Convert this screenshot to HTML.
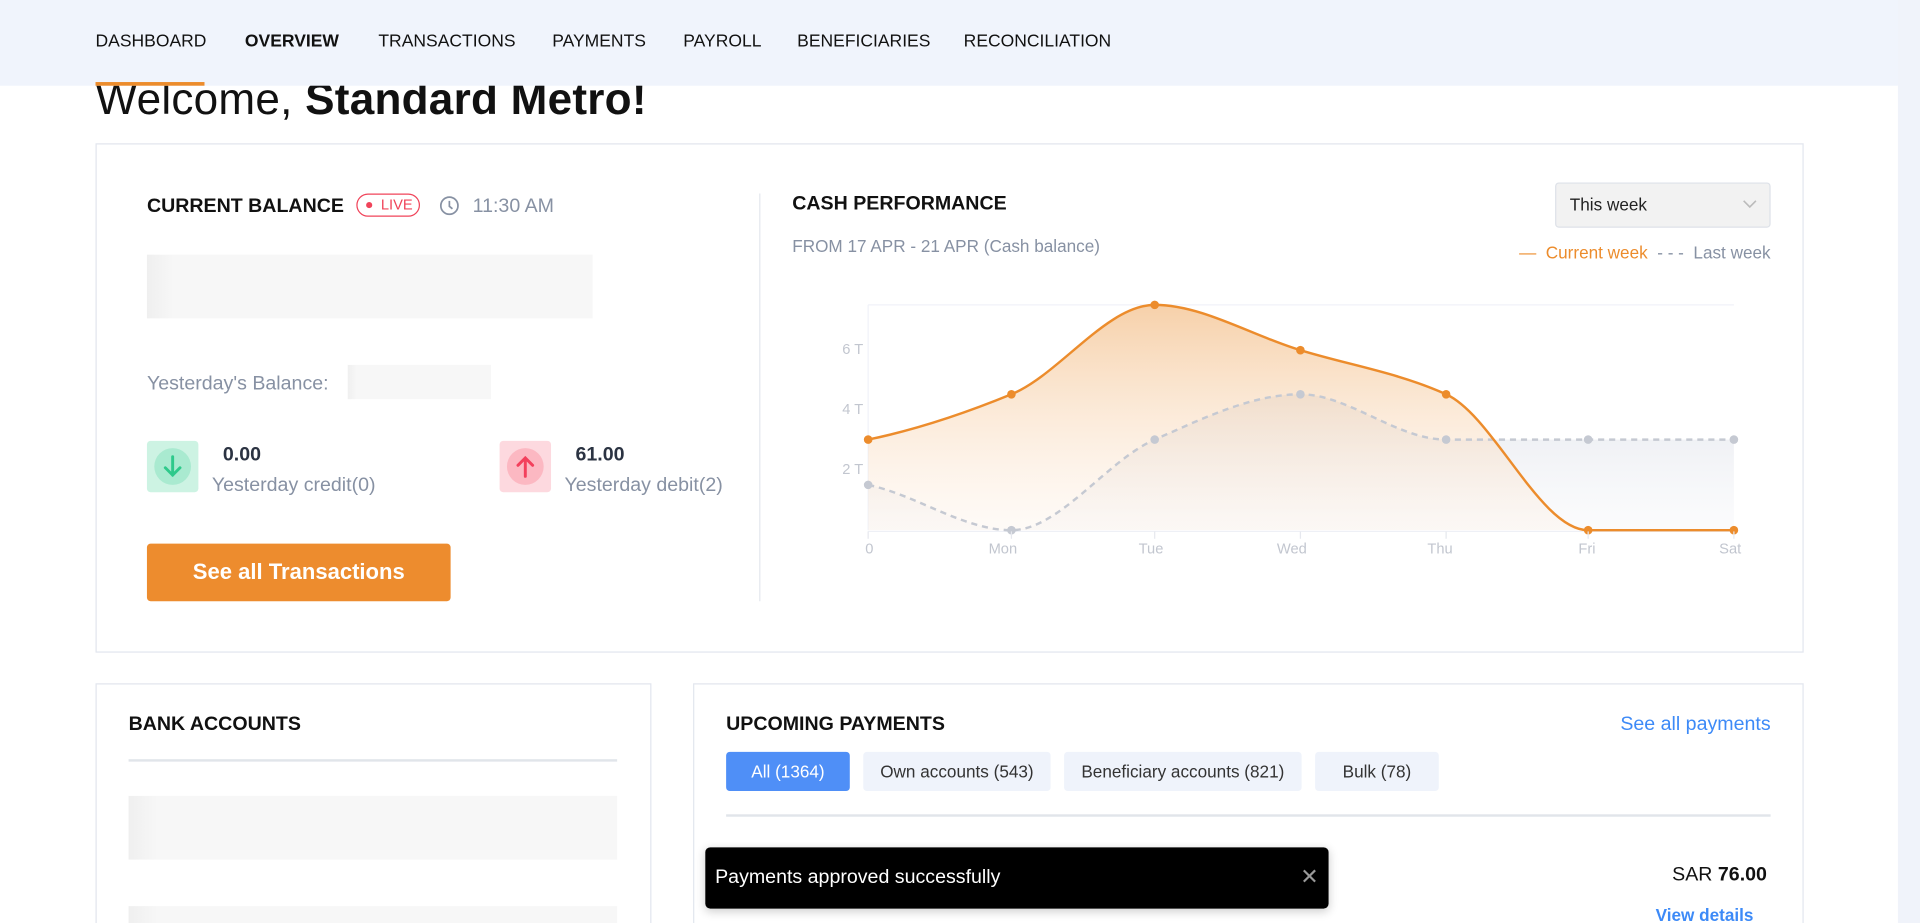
<!DOCTYPE html>
<html><head><meta charset="utf-8"><style>
html,body{margin:0;padding:0;width:1920px;height:923px;overflow:hidden;background:#fff}
#w{position:absolute;left:0;top:0;width:1568px;height:753.7px;overflow:hidden;transform:scale(1.22449);transform-origin:0 0;font-family:"Liberation Sans",sans-serif;color:#111}
.a{position:absolute;white-space:nowrap}
.g{color:#8791a3}
.card{position:absolute;border:1px solid #e2e6ee;background:#fff;box-sizing:border-box}
.sk{position:absolute;background:linear-gradient(90deg,#efefef,#f7f7f7 6%,#f7f7f7)}
.tab{position:absolute;top:614px;height:32px;line-height:32px;text-align:center;font-size:14px;border-radius:3px;background:#eff3fb;color:#333}
</style></head><body><div id="w">
<div class="a" style="left:1550px;top:0;width:18px;height:800px;background:#f0f3fa"></div>
<div class="a" style="left:78px;top:56px;font-size:36px;line-height:50px;letter-spacing:0.2px">Welcome, <b>Standard Metro!</b></div>
<div class="a" style="left:0;top:0;width:1550px;height:70px;background:#f0f4fc"></div>
<div class="a" style="left:78px;top:67px;width:89px;height:3px;background:#ec8c2c"></div>
<div class="a" style="top:25px;left:0;font-size:14.3px;line-height:18px">
<span class="a" style="left:78px">DASHBOARD</span><span class="a" style="left:200px;font-weight:bold">OVERVIEW</span><span class="a" style="left:309px">TRANSACTIONS</span><span class="a" style="left:451px">PAYMENTS</span><span class="a" style="left:558px">PAYROLL</span><span class="a" style="left:651px">BENEFICIARIES</span><span class="a" style="left:787px">RECONCILIATION</span></div>

<div class="card" style="left:78px;top:117px;width:1395px;height:416px"></div>
<div class="a" style="left:120px;top:159px;font-size:16px;font-weight:bold;line-height:20px">CURRENT BALANCE</div>
<div class="a" style="left:291px;top:158px;width:52px;height:19px;border:1px solid #f0445a;border-radius:10px;box-sizing:border-box;color:#f0445a;font-size:12px;line-height:17px"><span style="position:absolute;left:7px;top:6px;width:5px;height:5px;border-radius:50%;background:#f0445a"></span><span style="position:absolute;left:19px">LIVE</span></div>
<svg class="a" style="left:358px;top:159px" width="18" height="18" viewBox="0 0 18 18"><circle cx="9" cy="9" r="7" fill="none" stroke="#8791a3" stroke-width="1.4"/><path d="M9 5v4.5l2.5 2" fill="none" stroke="#8791a3" stroke-width="1.4"/></svg>
<div class="a g" style="left:386px;top:159px;font-size:16px;line-height:20px">11:30 AM</div>
<div class="sk" style="left:120px;top:208px;width:364px;height:52px"></div>
<div class="a g" style="left:120px;top:305px;font-size:16px">Yesterday's Balance:</div>
<div class="sk" style="left:284px;top:298px;width:117px;height:28px"></div>
<div class="a" style="left:120px;top:360px;width:42px;height:42px;border-radius:3px;background:#cdf3e3"><div style="position:absolute;left:6px;top:6px;width:30px;height:30px;border-radius:50%;background:#a9ead0"></div><svg style="position:absolute;left:11px;top:10px" width="20" height="22" viewBox="0 0 20 22"><path d="M10 3v15M4 12l6 6 6-6" fill="none" stroke="#2ec98b" stroke-width="2.4" stroke-linecap="round"/></svg></div>
<div class="a" style="left:182px;top:363px;font-size:16px;font-weight:bold;color:#2b3342">0.00</div>
<div class="a g" style="left:173px;top:388px;font-size:16px">Yesterday credit(0)</div>
<div class="a" style="left:408px;top:360px;width:42px;height:42px;border-radius:3px;background:#fdd9df"><div style="position:absolute;left:6px;top:6px;width:30px;height:30px;border-radius:50%;background:#fcb8c2"></div><svg style="position:absolute;left:11px;top:10px" width="20" height="22" viewBox="0 0 20 22"><path d="M10 19V4M4 10l6-6 6 6" fill="none" stroke="#f3405c" stroke-width="2.4" stroke-linecap="round"/></svg></div>
<div class="a" style="left:470px;top:363px;font-size:16px;font-weight:bold;color:#2b3342">61.00</div>
<div class="a g" style="left:461px;top:388px;font-size:16px">Yesterday debit(2)</div>
<div class="a" style="left:120px;top:444px;width:248px;height:47px;background:#ed8c2e;border-radius:3px;color:#fff;font-weight:bold;font-size:18px;line-height:47px;text-align:center">See all Transactions</div>
<div class="a" style="left:620px;top:158px;width:1px;height:333px;background:#e4e7ee"></div>

<div class="a" style="left:647px;top:157px;font-size:16px;font-weight:bold;line-height:20px">CASH PERFORMANCE</div>
<div class="a" style="left:1270px;top:149px;width:176px;height:37px;background:#f2f2f2;border:1px solid #dde1e8;border-radius:3px;box-sizing:border-box;font-size:14px;line-height:35px;padding-left:11px;color:#222">This week<svg style="position:absolute;right:10px;top:13px" width="12" height="8" viewBox="0 0 12 8"><path d="M1 1l5 5 5-5" fill="none" stroke="#bbb" stroke-width="1.3"/></svg></div>
<div class="a g" style="left:647px;top:193px;font-size:14px">FROM 17 APR - 21 APR (Cash balance)</div>
<div class="a" style="right:122px;top:198px;font-size:14px"><span style="color:#ec8c2c">— &nbsp;Current week</span> &nbsp;<span class="g">- - - &nbsp;Last week</span></div>
<svg class="a" style="left:0;top:0" width="1568" height="470" viewBox="0 0 1568 470">
<defs><linearGradient id="o" x1="0" y1="0" x2="0" y2="1"><stop offset="0" stop-color="#f5c89a" stop-opacity=".85"/><stop offset="1" stop-color="#fdf0e4" stop-opacity=".3"/></linearGradient>
<linearGradient id="s" x1="0" y1="0" x2="0" y2="1"><stop offset="0" stop-color="#dde0e8" stop-opacity=".7"/><stop offset="1" stop-color="#f2f3f7" stop-opacity=".3"/></linearGradient></defs>
<line x1="709" y1="249" x2="1416" y2="249" stroke="#f0f2f8"/><line x1="709" y1="249" x2="709" y2="433" stroke="#f0f2f8"/>
<path d="M709,396 C748,404 787,433 826,433 C865,433 904,376 943,359 C982,342 1022,322 1062,322 C1101,322 1141,359 1181,359 L1416,359 L1416,433 L709,433Z" fill="url(#s)"/>
<path d="M709,359 C748,351 787,338 826,322 C865,306 904,249 943,249 C982,249 1022,274 1062,286 C1101,298 1141,304 1181,322 C1220,340 1258,433 1297,433 L1416,433 L709,433Z" fill="url(#o)"/>
<line x1="709" y1="434" x2="1416" y2="434" stroke="#eef0f6"/>
<path d="M709,396 C748,404 787,433 826,433 C865,433 904,376 943,359 C982,342 1022,322 1062,322 C1101,322 1141,359 1181,359 L1416,359" fill="none" stroke="#c5c9d2" stroke-width="2" stroke-dasharray="5 4"/>
<path d="M709,359 C748,351 787,338 826,322 C865,306 904,249 943,249 C982,249 1022,274 1062,286 C1101,298 1141,304 1181,322 C1220,340 1258,433 1297,433 L1416,433" fill="none" stroke="#ec8c2c" stroke-width="2"/>
<g fill="#c5c9d2"><circle cx="709" cy="396" r="3.5"/><circle cx="826" cy="433" r="3.5"/><circle cx="943" cy="359" r="3.5"/><circle cx="1062" cy="322" r="3.5"/><circle cx="1181" cy="359" r="3.5"/><circle cx="1297" cy="359" r="3.5"/><circle cx="1416" cy="359" r="3.5"/></g>
<g fill="#ec8c2c"><circle cx="709" cy="359" r="3.5"/><circle cx="826" cy="322" r="3.5"/><circle cx="943" cy="249" r="3.5"/><circle cx="1062" cy="286" r="3.5"/><circle cx="1181" cy="322" r="3.5"/><circle cx="1297" cy="433" r="3.5"/><circle cx="1416" cy="433" r="3.5"/></g>
<g stroke="#e6e8ee"><line x1="709" y1="434" x2="709" y2="440"/><line x1="826" y1="434" x2="826" y2="440"/><line x1="943" y1="434" x2="943" y2="440"/><line x1="1062" y1="434" x2="1062" y2="440"/><line x1="1181" y1="434" x2="1181" y2="440"/><line x1="1297" y1="434" x2="1297" y2="440"/><line x1="1416" y1="434" x2="1416" y2="440"/></g>
<g font-family="Liberation Sans" font-size="12" fill="#c2c6cf"><text x="705" y="289" text-anchor="end">6 T</text><text x="705" y="338" text-anchor="end">4 T</text><text x="705" y="387" text-anchor="end">2 T</text>
<text x="710" y="452" text-anchor="middle">0</text><text x="819" y="452" text-anchor="middle">Mon</text><text x="940" y="452" text-anchor="middle">Tue</text><text x="1055" y="452" text-anchor="middle">Wed</text><text x="1176" y="452" text-anchor="middle">Thu</text><text x="1296" y="452" text-anchor="middle">Fri</text><text x="1413" y="452" text-anchor="middle">Sat</text></g>
</svg>

<div class="card" style="left:78px;top:558px;width:454px;height:300px"></div>
<div class="a" style="left:105px;top:582px;font-size:16px;font-weight:bold;line-height:20px">BANK ACCOUNTS</div>
<div class="a" style="left:105px;top:620px;width:399px;height:2px;background:#e1e5ea"></div>
<div class="sk" style="left:105px;top:650px;width:399px;height:52px"></div>
<div class="sk" style="left:105px;top:740px;width:399px;height:52px"></div>

<div class="card" style="left:566px;top:558px;width:907px;height:300px"></div>
<div class="a" style="left:593px;top:582px;font-size:16px;font-weight:bold;line-height:20px">UPCOMING PAYMENTS</div>
<div class="a" style="right:122px;top:582px;font-size:16px;line-height:20px;color:#3d8af7">See all payments</div>
<div class="tab" style="left:593px;width:101px;background:#4f8ff7;color:#fff">All (1364)</div>
<div class="tab" style="left:705px;width:153px">Own accounts (543)</div>
<div class="tab" style="left:869px;width:194px">Beneficiary accounts (821)</div>
<div class="tab" style="left:1074px;width:101px">Bulk (78)</div>
<div class="a" style="left:593px;top:665px;width:853px;height:2px;background:#e1e5ea"></div>
<div class="a" style="right:125px;top:705px;font-size:16px;line-height:20px">SAR <b>76.00</b></div>
<div class="a" style="right:136px;top:739px;font-size:14px;font-weight:bold;color:#3d8af7">View details</div>
<div class="a" style="left:576px;top:692px;width:509px;height:50px;background:#000;border-radius:4px;box-shadow:0 2px 8px rgba(0,0,0,.2)"><span style="position:absolute;left:8px;top:16px;color:#fff;font-size:16px">Payments approved successfully</span><span style="position:absolute;right:8px;top:14px;color:#999;font-size:18px">✕</span></div>
</div></body></html>
